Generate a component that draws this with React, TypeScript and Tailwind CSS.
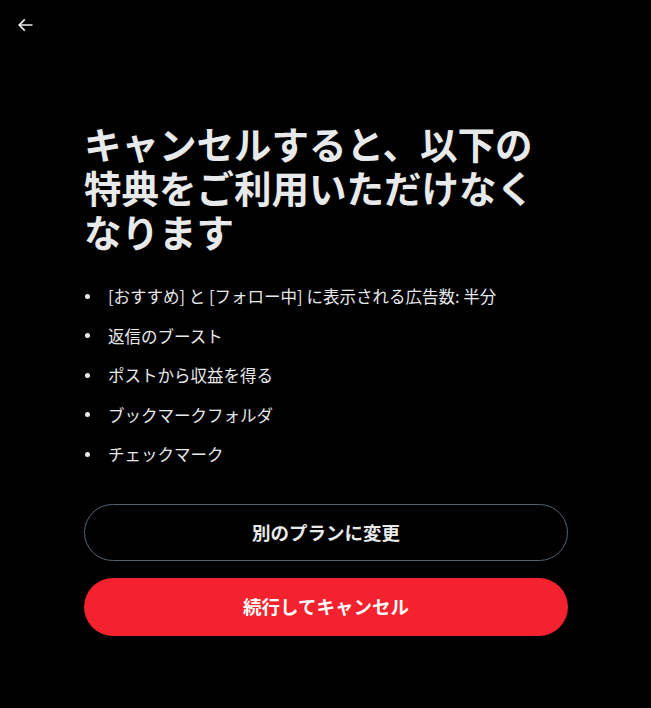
import React from 'react';

const perks = [
  '[おすすめ] と [フォロー中] に表示される広告数: 半分',
  '返信のブースト',
  'ポストから収益を得る',
  'ブックマークフォルダ',
  'チェックマーク',
];

const App: React.FC = () => {
  return (
    <div
      className="min-h-screen w-full bg-black text-[#e7e9ea]"
      style={{ fontFamily: '"Noto Sans CJK JP", "Noto Sans", sans-serif' }}
    >
      {/* header */}
      <div className="flex h-[50px] items-center px-[14px]">
        <button className="flex h-[22px] w-[22px] items-center justify-center">
          <svg viewBox="0 0 24 24" className="h-[20px] w-[20px]" fill="currentColor">
            <path d="M7.414 13l5.043 5.04-1.414 1.42L3.586 12l7.457-7.46 1.414 1.42L7.414 11H21v2H7.414z" />
          </svg>
        </button>
      </div>

      <div className="px-[84px] pt-[71px]">
        <h1 className="w-[484px] text-[37.5px] font-bold leading-[44px]">
          キャンセルすると、以下の特典をご利用いただけなくなります
        </h1>

        <ul className="mt-[31px] flex flex-col gap-[15.5px]">
          {perks.map((perk) => (
            <li key={perk} className="flex h-[24px] items-center text-[16.5px] leading-[24px]">
              <span className="ml-[1px] mr-[18px] h-[5px] w-[5px] shrink-0 rounded-full bg-[#e7e9ea]" />
              <span>{perk}</span>
            </li>
          ))}
        </ul>

        <div className="mt-[38px] flex w-[484px] flex-col gap-[17px]">
          <button className="flex h-[57px] w-full items-center justify-center rounded-full border border-[#536471] text-[18.5px] font-bold text-[#e7e9ea]">
            別のプランに変更
          </button>
          <button className="flex h-[58px] w-full items-center justify-center rounded-full bg-[#f4212e] text-[18.5px] font-bold text-white">
            続行してキャンセル
          </button>
        </div>
      </div>
    </div>
  );
};

export default App;
